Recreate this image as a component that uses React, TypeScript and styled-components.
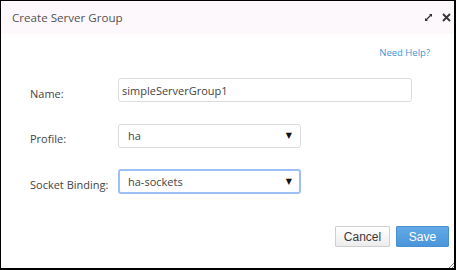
import styled, { createGlobalStyle } from 'styled-components'

const GlobalStyle = createGlobalStyle`
    html, body {
        margin: 0;
        padding: 0;
        background: #fff;
    }
`

const Dialog = styled.section`
    width: 456px;
    height: 270px;
    box-sizing: border-box;
    border: 1px solid #000;
    border-right-width: 2px;
    border-bottom-width: 2px;
    display: flex;
    flex-direction: column;
    position: relative;
    background: #fff;
    font-family: 'Open Sans', 'DejaVu Sans', sans-serif;
`

const TitleBar = styled.header`
    height: 33px;
    background: #fcf8fc;
    display: flex;
    align-items: center;
    padding: 0 2px 0 11px;
`

const Title = styled.h1`
    flex: 1;
    margin: 0;
    font-size: 11.6px;
    font-weight: 400;
    color: #525252;
`

const IconButton = styled.span`
    width: 12px;
    height: 12px;
    display: flex;
    align-items: center;
    justify-content: center;
    margin-left: 6px;
`

const Body = styled.div`
    flex: 1;
    display: flex;
    flex-direction: column;
    padding: 12px 24px 0 29px;
`

const HelpLink = styled.a`
    align-self: flex-end;
    font-size: 9.5px;
    color: #3d97d6;
    text-decoration: none;
`

const Form = styled.div`
    display: grid;
    grid-template-columns: 88px 1fr;
    row-gap: 21.5px;
    margin-top: 19px;
    align-items: center;
`

const Label = styled.label`
    font-size: 11px;
    color: #444;
    padding-top: 6px;
`

const TextInput = styled.div`
    width: 294px;
    height: 24px;
    box-sizing: border-box;
    border: 1px solid #dcdcdc;
    border-radius: 3px;
    padding: 0 3px;
    display: flex;
    align-items: center;
    font-size: 11px;
    color: #444;
`

const Select = styled.div<{ focused?: boolean }>`
    width: 183px;
    height: ${({ focused }) => (focused ? '25px' : '24px')};
    box-sizing: border-box;
    border: ${({ focused }) => (focused ? '2px solid #9cc0f5' : '1px solid #dcdcdc')};
    border-radius: 3px;
    padding: ${({ focused }) => (focused ? '0 7px 0 8px' : '0 8px 0 9px')};
    display: flex;
    align-items: center;
    justify-content: space-between;
    font-size: 11px;
    color: #444;
`

const Arrow = styled.span`
    font-size: 8px;
    color: #111;
    font-family: 'DejaVu Sans', sans-serif;
`

const Footer = styled.footer`
    display: flex;
    justify-content: flex-end;
    gap: 6px;
    padding: 0 5px 21px 0;
`

const Button = styled.button<{ primary?: boolean }>`
    height: 21px;
    box-sizing: border-box;
    padding: 0;
    width: ${({ primary }) => (primary ? '53px' : '55px')};
    font-family: 'Liberation Sans', Arial, sans-serif;
    font-size: 12px;
    border-radius: 1px;
    color: ${({ primary }) => (primary ? '#fff' : '#3a3a3a')};
    border: 1px solid ${({ primary }) => (primary ? '#4a8fd0' : '#cfcfcf')};
    background: ${({ primary }) =>
        primary ? 'linear-gradient(#62abe6, #4a94d9)' : 'linear-gradient(#ffffff, #ececec)'};
`

const Grip = styled.svg`
    position: absolute;
    right: 0;
    bottom: 0;
`

const App = () => {
    return (
        <>
            <GlobalStyle />
            <Dialog>
                <TitleBar>
                    <Title>Create Server Group</Title>
                    <IconButton>
                        <svg width="9" height="9" viewBox="0 0 9 9">
                            <path d="M5 1h3v3z M4 8H1V5z" fill="#333" />
                            <path d="M7 2L2 7" stroke="#333" strokeWidth="1.2" />
                        </svg>
                    </IconButton>
                    <IconButton>
                        <svg width="9" height="9" viewBox="0 0 9 9">
                            <path d="M1 1l7 7M8 1l-7 7" stroke="#333" strokeWidth="1.8" />
                        </svg>
                    </IconButton>
                </TitleBar>
                <Body>
                    <HelpLink href="#">Need Help?</HelpLink>
                    <Form>
                        <Label>Name:</Label>
                        <TextInput>simpleServerGroup1</TextInput>
                        <Label>Profile:</Label>
                        <Select>
                            ha
                            <Arrow>▼</Arrow>
                        </Select>
                        <Label>Socket Binding:</Label>
                        <Select focused>
                            ha-sockets
                            <Arrow>▼</Arrow>
                        </Select>
                    </Form>
                </Body>
                <Footer>
                    <Button>Cancel</Button>
                    <Button primary>Save</Button>
                </Footer>
                <Grip width="6" height="6" viewBox="0 0 6 6">
                    <path d="M6 1L1 6M6 4L4 6" stroke="#888" strokeWidth="1" />
                </Grip>
            </Dialog>
        </>
    )
}

export default App
